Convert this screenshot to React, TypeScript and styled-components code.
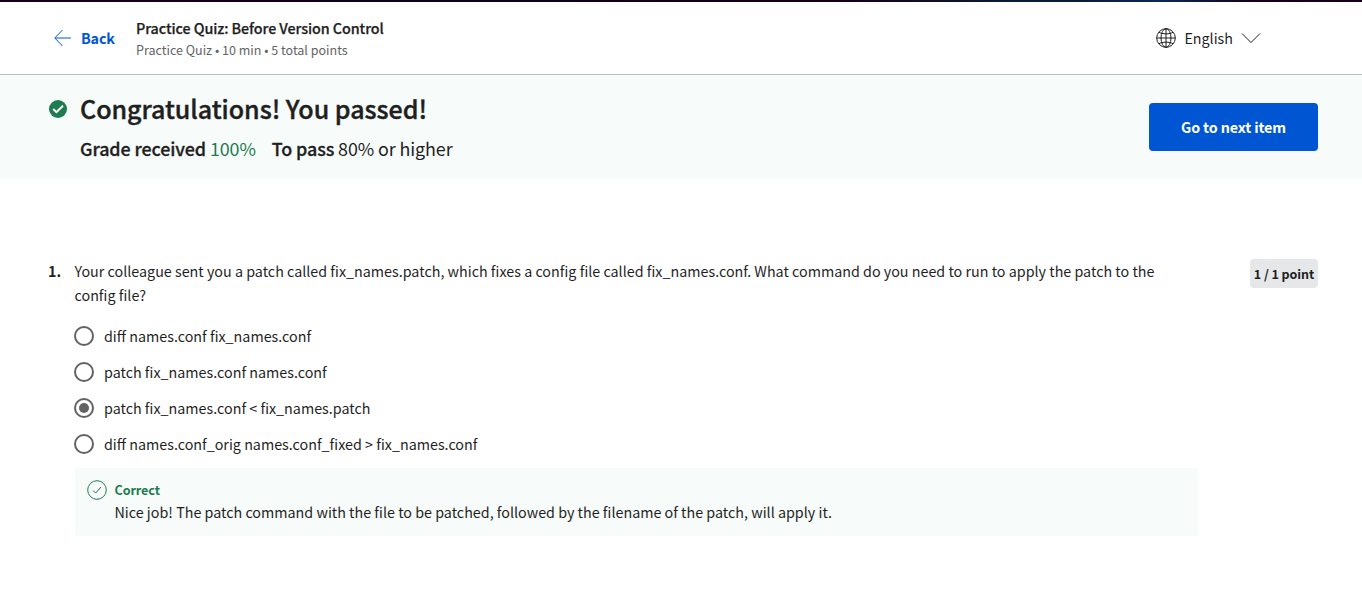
import React from "react";
import styled, { createGlobalStyle } from "styled-components";

const Global = createGlobalStyle`
  *, *::before, *::after { box-sizing: border-box; }
  body {
    margin: 0;
    background: #fff;
    color: #1f1f1f;
    font-family: "Noto Sans CJK JP", "Noto Sans CJK SC", "Noto Sans", sans-serif;
    font-size: 14.32px;
    line-height: 24px;
  }
`;

const Page = styled.div`
  height: 597px;
  overflow: hidden;
`;

const TopStrip = styled.div`
  height: 2px;
  background: linear-gradient(90deg, #14001a 0%, #10001a 38%, #170016 62%, #0a1a38 74%, #0a1a38 79%, #0a2a50 85%, #14001e 92%, #170018 100%);
`;

const Header = styled.header`
  display: flex;
  align-items: center;
  height: 73px;
  padding: 0 101px 0 53px;
  border-bottom: 1px solid #bdbdbd;
`;

const BackLink = styled.a`
  display: flex;
  align-items: center;
  gap: 9px;
  width: 83px;
  color: #0056d2;
  font-weight: 700;
  letter-spacing: -0.15px;
`;

const TitleBlock = styled.div`
  flex: 1;
`;

const Title = styled.div`
  font-size: 14.32px;
  font-weight: 500;
  letter-spacing: -0.07px;
  line-height: 22px;
  -webkit-text-stroke: 0.25px currentColor;
`;

const Subtitle = styled.div`
  padding-top: 1px;
  color: #636363;
  font-size: 12.54px;
  line-height: 20px;
  margin-bottom: -1px;
`;

const Language = styled.div`
  display: flex;
  align-items: center;
  gap: 8px;
`;

const Banner = styled.section`
  display: flex;
  align-items: flex-start;
  height: 104px;
  padding: 0 44px 0 49px;
  background: #f7fbf9;
`;

const BannerIcon = styled.div`
  display: flex;
  width: 31px;
  padding-top: 25px;
`;

const BannerText = styled.div`
  flex: 1;
  padding-top: 15px;
`;

const Heading = styled.h1`
  margin: 0;
  font-size: 25.06px;
  font-weight: 500;
  letter-spacing: -0.04px;
  line-height: 36px;
  -webkit-text-stroke: 0.4px currentColor;
`;

const Grades = styled.div`
  display: flex;
  gap: 16px;
  margin-top: 8px;
  font-size: 17.9px;
  letter-spacing: -0.1px;
  line-height: 28px;
`;

const Strong = styled.span`
  font-weight: 500;
  -webkit-text-stroke: 0.3px currentColor;
`;

const Passed = styled.span`
  color: #1d7c50;
`;

const NextButton = styled.button`
  width: 169px;
  height: 48px;
  margin-top: 28px;
  padding: 0;
  border: 0;
  border-radius: 4px;
  background: #0056d2;
  color: #fff;
  font: inherit;
  font-weight: 700;
  letter-spacing: -0.12px;
`;

const Question = styled.main`
  display: flex;
  align-items: flex-start;
  padding: 80px 44px 0 48px;
`;

const Number = styled.div`
  width: 26px;
  font-weight: 700;
`;

const Body = styled.div`
  width: 1124px;
`;

const Prompt = styled.p`
  width: 1100px;
  margin: 0 0 11px;
  padding-left: 0.5px;
`;

const Option = styled.label`
  display: flex;
  align-items: center;
  gap: 10px;
  height: 36px;
`;

const Radio = styled.span<{ $checked?: boolean }>`
  display: grid;
  place-items: center;
  width: 20px;
  height: 20px;
  border: 2px solid #636363;
  border-radius: 50%;

  &::after {
    content: "";
    width: 10px;
    height: 10px;
    border-radius: 50%;
    background: ${(p) => (p.$checked ? "#636363" : "transparent")};
  }
`;

const Feedback = styled.div`
  display: flex;
  gap: 7.5px;
  height: 68px;
  margin: 6px 0 0 1px;
  padding: 12px;
  background: #f7fbf9;
`;

const FeedbackTitle = styled.div`
  color: #1d7c50;
  font-size: 12.54px;
  font-weight: 700;
  letter-spacing: -0.07px;
  line-height: 20px;
`;

const Points = styled.div`
  width: 68px;
  height: 29px;
  margin-left: auto;
  border-radius: 4px;
  background: #e5e7e8;
  font-size: 12.54px;
  font-weight: 700;
  letter-spacing: -0.07px;
  line-height: 29px;
  text-align: center;
  white-space: nowrap;
`;

const options = [
  "diff names.conf fix_names.conf",
  "patch fix_names.conf names.conf",
  "patch fix_names.conf < fix_names.patch",
  "diff names.conf_orig names.conf_fixed > fix_names.conf",
];

const ArrowIcon = () => (
  <svg width="19" height="18" viewBox="0 0 19 18" fill="none" stroke="#0056d2">
    <path d="M18 9H2M9.5 1L1.8 9l7.7 8" />
  </svg>
);

const GlobeIcon = () => (
  <svg width="20" height="20" viewBox="0 0 20 20" fill="none" stroke="#1f1f1f">
    <circle cx="10" cy="10" r="9.3" />
    <ellipse cx="10" cy="10" rx="5" ry="9.3" />
    <path d="M10 .7v18.6M.7 10h18.6M3 4.2c3 2.2 11 2.2 14 0M3 15.8c3-2.2 11-2.2 14 0" />
  </svg>
);

const ChevronIcon = () => (
  <svg width="20" height="12" viewBox="0 0 20 12" fill="none" stroke="#1f1f1f">
    <path d="M1 1.5l9 9 9-9" />
  </svg>
);

const PassedIcon = () => (
  <svg width="18" height="18" viewBox="0 0 18 18" fill="none">
    <circle cx="9" cy="9" r="9" fill="#1d7c50" />
    <path d="M4.2 9l3.2 3.2 6.6-6.4" stroke="#fff" strokeWidth="2" />
  </svg>
);

const CorrectIcon = () => (
  <svg width="20" height="20" viewBox="0 0 20 20" fill="none" stroke="#1d7c50">
    <circle cx="10" cy="10" r="9.3" />
    <path d="M6 10.4l2.7 2.7L14 7" />
  </svg>
);

export default function App() {
  return (
    <Page>
      <Global />
      <TopStrip />
      <Header>
        <BackLink>
          <ArrowIcon />
          <span>Back</span>
        </BackLink>
        <TitleBlock>
          <Title>Practice Quiz: Before Version Control</Title>
          <Subtitle>Practice Quiz • 10 min • 5 total points</Subtitle>
        </TitleBlock>
        <Language>
          <GlobeIcon />
          <span>English</span>
          <ChevronIcon />
        </Language>
      </Header>
      <Banner>
        <BannerIcon>
          <PassedIcon />
        </BannerIcon>
        <BannerText>
          <Heading>Congratulations! You passed!</Heading>
          <Grades>
            <span>
              <Strong>Grade received</Strong> <Passed>100%</Passed>
            </span>
            <span>
              <Strong>To pass</Strong> 80% or higher
            </span>
          </Grades>
        </BannerText>
        <NextButton>Go to next item</NextButton>
      </Banner>
      <Question>
        <Number>1.</Number>
        <Body>
          <Prompt>
            Your colleague sent you a patch called fix_names.patch, which fixes a config file called
            fix_names.conf. What command do you need to run to apply the patch to the config file?
          </Prompt>
          {options.map((text, i) => (
            <Option key={text}>
              <Radio $checked={i === 2} />
              <span>{text}</span>
            </Option>
          ))}
          <Feedback>
            <CorrectIcon />
            <div>
              <FeedbackTitle>Correct</FeedbackTitle>
              <div>
                Nice job! The patch command with the file to be patched, followed by the filename of
                the patch, will apply it.
              </div>
            </div>
          </Feedback>
        </Body>
        <Points>1 / 1 point</Points>
      </Question>
    </Page>
  );
}
